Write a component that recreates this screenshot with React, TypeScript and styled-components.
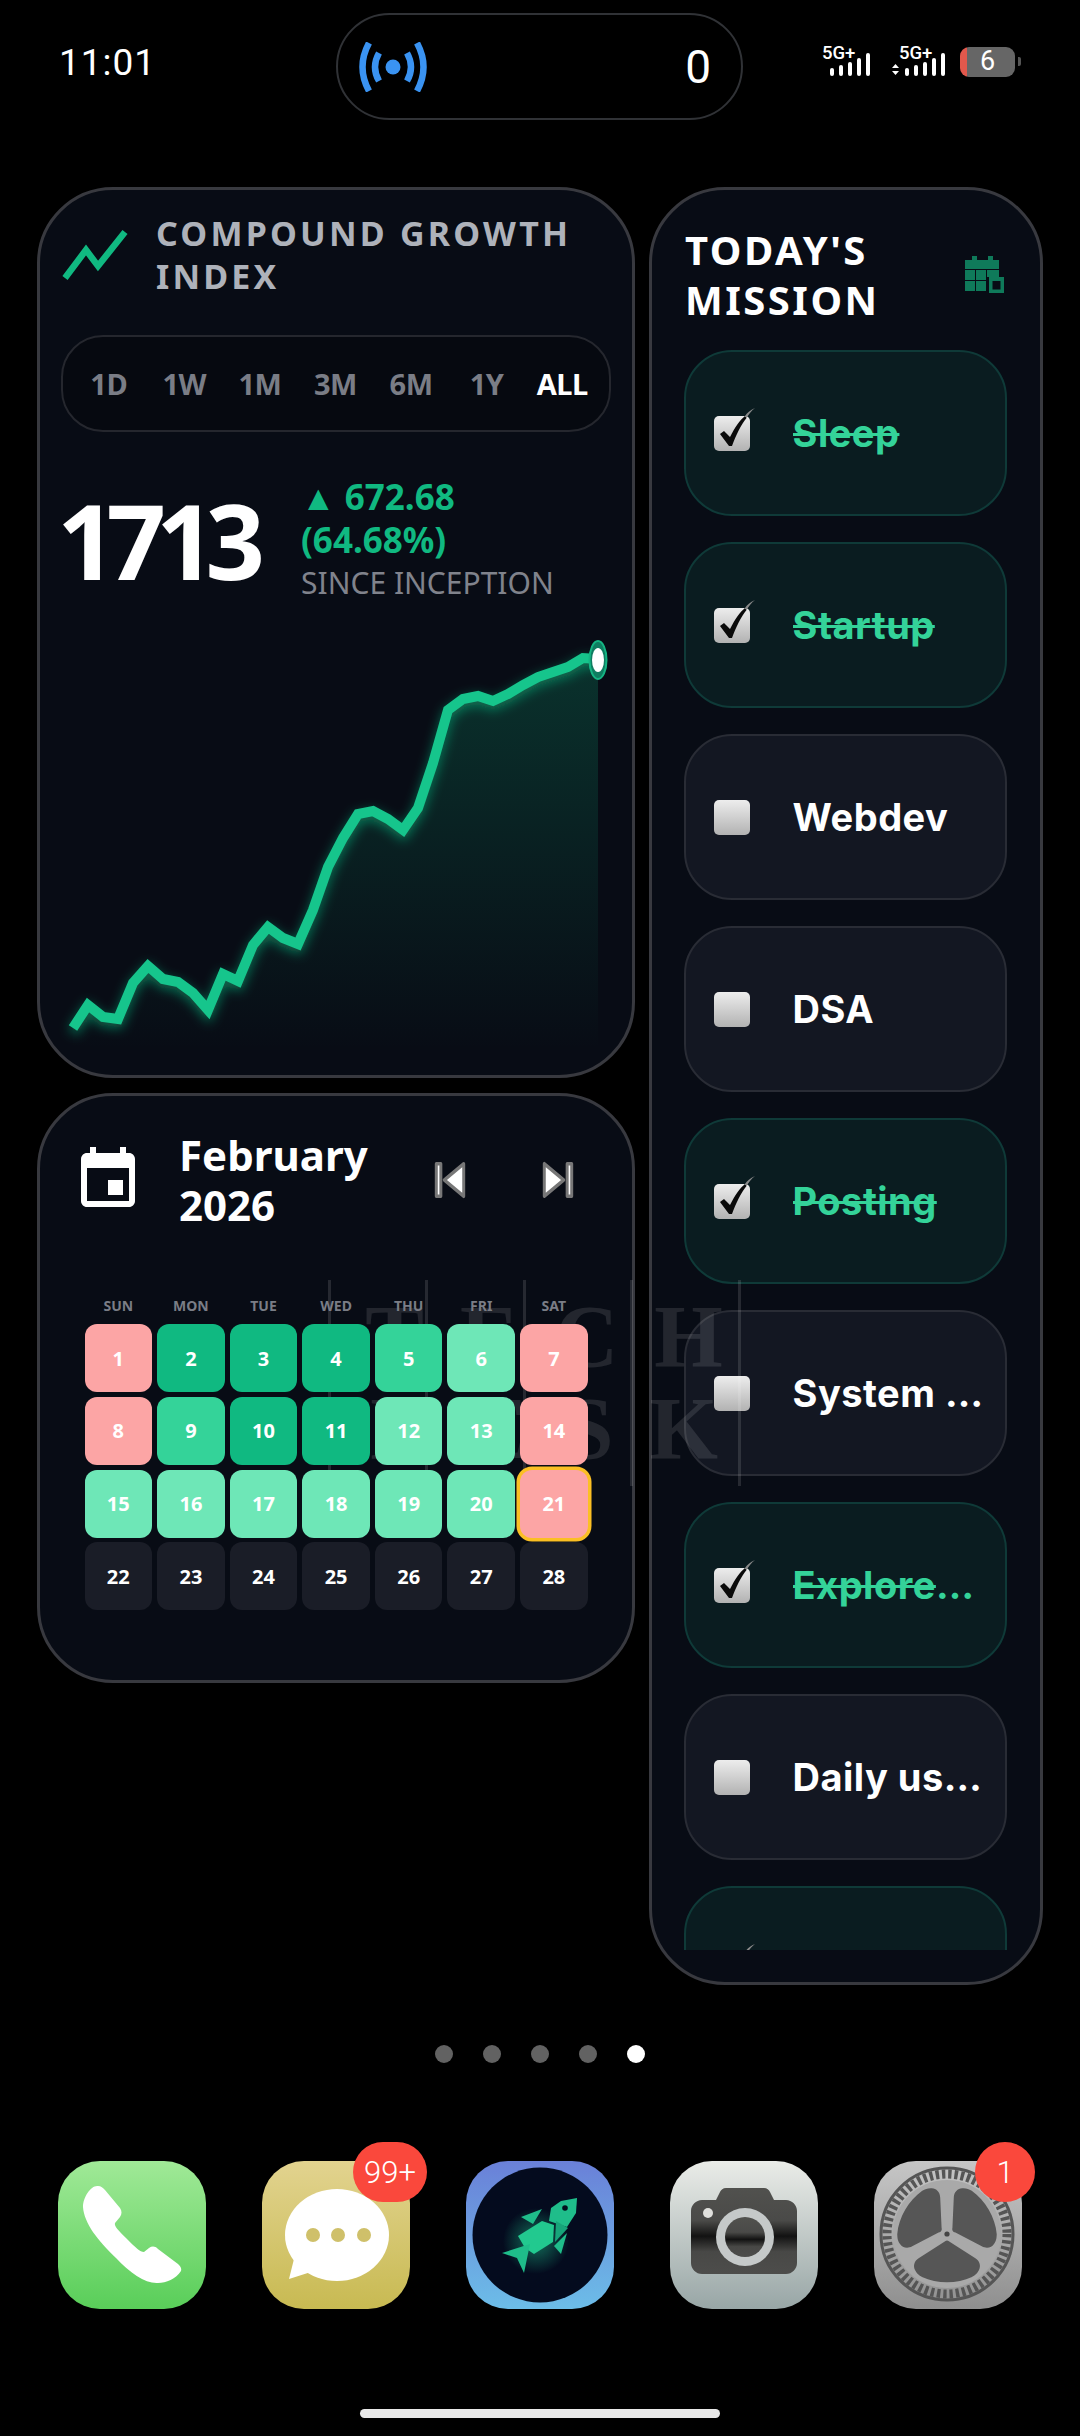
import React from "react";
import styled, { createGlobalStyle } from "styled-components";

const Global = createGlobalStyle`
  html, body { margin: 0; padding: 0; background: #000; }
  * { box-sizing: border-box; }
`;

const SANS = `"Noto Sans", "Open Sans", sans-serif`;

const Screen = styled.div`
  position: relative;
  width: 1080px;
  height: 2436px;
  background: #000;
  overflow: hidden;
  display: flex;
  flex-direction: column;
  font-family: ${SANS};
  color: #fff;
`;

/* ---------- status bar ---------- */
const StatusBar = styled.header`
  display: grid;
  grid-template-columns: 277px 407px 1fr;
  align-items: center;
  height: 107px;
  margin-top: 13px;
  padding-left: 59px;
`;
const Clock = styled.div`
  font-family: Roboto, sans-serif;
  font-size: 37px;
  letter-spacing: 1px;
  line-height: 1;
  margin-top: -8px;
`;
const Island = styled.div`
  height: 107px;
  border: 2px solid #303236;
  border-radius: 54px;
  display: flex;
  align-items: center;
  justify-content: space-between;
  padding: 0 30px 0 20px;
`;
const IslandCount = styled.span`
  font-family: Roboto, sans-serif;
  font-size: 46px;
  font-weight: 400;
  line-height: 1;
`;
const StatusIcons = styled.div`
  display: flex;
  align-items: center;
  padding-left: 79px;
  gap: 20px;
  margin-top: -10px;
`;
const SignalSvg = styled.svg`
  display: block;
  height: 32px;
  overflow: visible;
`;
const Battery = styled.div`
  position: relative;
  width: 55px;
  height: 30px;
  margin-left: -6px;
  border-radius: 9px;
  background: linear-gradient(90deg, #e2584c 0 7px, #666 7px);
  display: flex;
  align-items: center;
  justify-content: center;
  font-family: Roboto, sans-serif;
  font-size: 27px;
  line-height: 1;
  &::after {
    content: "";
    position: absolute;
    right: -6px;
    top: 10px;
    width: 3px;
    height: 9px;
    border-radius: 0 2px 2px 0;
    background: #555;
  }
`;

/* ---------- widgets ---------- */
const Widgets = styled.main`
  display: grid;
  grid-template-columns: 598px 394px;
  column-gap: 14px;
  height: 1798px;
  margin-top: 67px;
  padding-left: 37px;
`;
const LeftColumn = styled.div`
  display: flex;
  flex-direction: column;
  gap: 15px;
`;
const Card = styled.section<{ $h?: number }>`
  background: #080c15;
  border: 3px solid #38393f;
  border-radius: 76px;
  height: ${(p) => (p.$h ? `${p.$h}px` : "100%")};
  overflow: hidden;
`;

const ChartHeader = styled.div`
  display: flex;
  align-items: center;
  gap: 26px;
  padding: 22px 20px 0 22px;
`;
const ChartTitle = styled.h2`
  margin: 0;
  font-size: 34px;
  line-height: 43px;
  font-weight: 700;
  letter-spacing: 3.2px;
  color: #aeb2ba;
`;
const Ranges = styled.div`
  display: grid;
  grid-template-columns: repeat(7, 1fr);
  align-items: center;
  width: 550px;
  height: 97px;
  margin: 37px 0 0 21px;
  padding: 0 9px 0 8px;
  background: #060910;
  border: 2.5px solid #25272e;
  border-radius: 42px;
`;
const RangeItem = styled.span<{ $active?: boolean }>`
  text-align: center;
  font-size: 29px;
  font-weight: 700;
  letter-spacing: -0.5px;
  color: ${(p) => (p.$active ? "#fff" : "#7a7d86")};
`;
const Stats = styled.div`
  display: flex;
  align-items: flex-start;
  margin: 43px 0 0 17px;
`;
const IndexValue = styled.div`
  font-size: 104px;
  font-weight: 700;
  line-height: 129px;
  letter-spacing: -10px;
  width: 244px;
`;
const Delta = styled.div`
  color: #10b981;
  font-size: 35px;
  font-weight: 700;
  line-height: 43px;
  white-space: nowrap;
`;
const Since = styled.div`
  color: #80838c;
  font-size: 30px;
  line-height: 43px;
  white-space: nowrap;
`;
const ChartSvg = styled.svg`
  display: block;
  width: 550px;
  height: 420px;
  margin: 36px 0 0 20px;
  overflow: visible;
`;

const CalendarHeader = styled.div`
  display: flex;
  align-items: center;
  padding: 34px 0 0 32px;
`;
const MonthTitle = styled.h2`
  flex: 0 0 255px;
  margin: 0 0 0 35px;
  font-size: 42px;
  font-weight: 700;
  line-height: 50px;
`;
const SkipButton = styled.svg`
  display: block;
  flex: 0 0 32px;
  height: 38px;
  margin-right: 76px;
  &:last-child {
    margin-right: 0;
  }
`;
const Weekdays = styled.div`
  display: grid;
  grid-template-columns: repeat(7, 67.6px);
  column-gap: 5px;
  margin: 66px 0 8px 44.5px;
  position: relative;
  z-index: 2;
`;
const Weekday = styled.span`
  text-align: center;
  font-size: 14px;
  font-weight: 700;
  line-height: 20px;
  color: #7a7d86;
`;
const Days = styled.div`
  display: grid;
  grid-template-columns: repeat(7, 67.6px);
  grid-auto-rows: 68px;
  gap: 4.8px 5px;
  margin-left: 44.5px;
`;
const DAY_COLORS = {
  pink: "#fca5a5",
  dark: "#10b981",
  mid: "#34d399",
  light: "#6ee7b7",
  none: "#1a1d27",
} as const;
const Day = styled.div<{ $tone: keyof typeof DAY_COLORS; $today?: boolean }>`
  position: relative;
  z-index: 2;
  display: flex;
  align-items: center;
  justify-content: center;
  border-radius: 12px;
  background: ${(p) => DAY_COLORS[p.$tone]};
  font-size: 20px;
  font-weight: 700;
  color: #fff;
  box-shadow: ${(p) => (p.$today ? "0 0 0 3.5px #fbbf24" : "none")};
`;

/* ---------- missions ---------- */
const MissionHeader = styled.div`
  display: flex;
  align-items: center;
  justify-content: space-between;
  padding: 35px 35px 0 33px;
`;
const MissionTitle = styled.h2`
  margin: 0;
  font-size: 40px;
  font-weight: 700;
  line-height: 50px;
  letter-spacing: 2.5px;
`;
const MissionList = styled.div`
  display: flex;
  flex-direction: column;
  gap: 26px;
  height: 1600px;
  margin: 25px 33px 0 32px;
  overflow: hidden;
`;
const Task = styled.div<{ $done?: boolean }>`
  flex: 0 0 166px;
  display: flex;
  align-items: center;
  gap: 39px;
  padding: 0 22px 0 27.5px;
  border: 2.5px solid ${(p) => (p.$done ? "#0f3a38" : "#292c35")};
  border-radius: 48px;
  background: ${(p) => (p.$done ? "#0a1c20" : "#131722")};
`;
const TaskName = styled.span<{ $done?: boolean }>`
  flex: 1;
  min-width: 0;
  white-space: nowrap;
  overflow: hidden;
  text-overflow: ellipsis;
  font-family: Inter, sans-serif;
  font-size: 38px;
  letter-spacing: 0.5px;
  font-weight: 700;
  color: ${(p) => (p.$done ? "#34d399" : "#fff")};
  text-decoration: ${(p) => (p.$done ? "line-through" : "none")};
  text-decoration-thickness: 3px;
`;
const CheckSvg = styled.svg`
  flex: 0 0 40px;
  width: 40px;
  height: 46px;
  margin-top: -4px;
  overflow: visible;
`;

/* ---------- pager + dock ---------- */
const Pager = styled.div`
  display: flex;
  justify-content: center;
  gap: 30px;
  margin-top: 60px;
`;
const PagerDot = styled.span<{ $on?: boolean }>`
  width: 18px;
  height: 18px;
  border-radius: 50%;
  background: ${(p) => (p.$on ? "#fff" : "#626262")};
`;
const Dock = styled.nav`
  display: flex;
  gap: 56px;
  margin-top: 98px;
  padding-left: 58px;
`;
const AppIcon = styled.div`
  position: relative;
  width: 148px;
  height: 148px;
`;
const AppArt = styled.svg`
  display: block;
  width: 148px;
  height: 148px;
`;
const Badge = styled.span<{ $left: number; $w: number }>`
  position: absolute;
  top: -19px;
  left: ${(p) => p.$left}px;
  width: ${(p) => p.$w}px;
  height: 60px;
  border-radius: 30px;
  background: #fa483c;
  display: flex;
  align-items: center;
  justify-content: center;
  font-family: Roboto, sans-serif;
  font-size: 31px;
  font-weight: 300;
  line-height: 1;
`;
const HomeBar = styled.div`
  align-self: center;
  width: 360px;
  height: 9px;
  border-radius: 5px;
  background: #e8e8e8;
  margin-top: 100px;
`;

/* ---------- watermark over the widgets ---------- */
const Watermark = styled.div`
  position: absolute;
  left: 328px;
  top: 1280px;
  width: 412px;
  height: 206px;
  padding-left: 56px;
  z-index: 1;
  pointer-events: none;
  display: flex;
  flex-direction: column;
  align-items: center;
  justify-content: center;
  font-family: "Liberation Serif", serif;
  font-size: 88px;
  font-weight: 700;
  line-height: 92px;
  letter-spacing: 36px;
  white-space: nowrap;
  color: rgba(255, 255, 255, 0.11);
`;
const WatermarkRule = styled.i<{ $x: number }>`
  position: absolute;
  top: 0;
  bottom: 0;
  left: ${(p) => p.$x}px;
  width: 3px;
  background: rgba(255, 255, 255, 0.12);
`;

/* ---------- drawings ---------- */
const Tether = () => (
  <svg width="70" height="50" viewBox="0 0 70 50" style={{ display: "block", height: 50 }}>
    <g fill="none" stroke="#3a93f2" strokeWidth="6.5" strokeLinecap="butt">
      <path d="M11 1 Q-2 25 11 49" />
      <path d="M59 1 Q72 25 59 49" />
      <path d="M21 11 Q13 25 21 39" />
      <path d="M49 11 Q57 25 49 39" />
    </g>
    <circle cx="35" cy="25" r="7.5" fill="#3a93f2" />
  </svg>
);

const Signal = ({ arrows }: { arrows?: boolean }) => (
  <SignalSvg width={arrows ? 54 : 50} viewBox={arrows ? "0 0 54 32" : "0 0 50 32"}>
    <text x={arrows ? 7 : 0} y="13" fontFamily="Roboto, sans-serif" fontSize="18.500" fontWeight="500" fill="#fff">5G+</text>
    {arrows && <path d="M0 22l3.5-4 3.500 4zM0 25l3.500 4 3.500-4z" fill="#fff" />}
    {[8, 11, 14, 18, 23].map((h, i) => (
      <rect
        key={h}
        x={(arrows ? 13 : 8) + i * 9}
        y={30 - h}
        width="4"
        height={h}
        rx="2"
        fill="#fff"
      />
    ))}
  </SignalSvg>
);

const CHART_Y = [
  1028, 1005, 1017, 1019, 983, 966, 979, 982, 993, 1010, 974, 981, 945, 927, 938, 944, 910, 867,
  838, 814, 811, 819, 830, 808, 763, 710, 699, 696, 701, 694, 685, 677, 672, 667, 658, 659,
];
const CHART_LINE = CHART_Y.map((y, i) => `${73 + i * 15},${y}`).join(" L");

const Chart = () => (
  <ChartSvg viewBox="60 640 550 420">
    <defs>
      <linearGradient id="area" x1="0" y1="0" x2="0" y2="1">
        <stop offset="0" stopColor="#10b981" stopOpacity="0.22" />
        <stop offset="1" stopColor="#10b981" stopOpacity="0" />
      </linearGradient>
      <filter id="glow" x="-10%" y="-10%" width="120%" height="120%">
        <feGaussianBlur stdDeviation="6" />
      </filter>
    </defs>
    <path d={`M${CHART_LINE} L598,1050 L73,1050 Z`} fill="url(#area)" />
    <path d={`M${CHART_LINE}`} fill="none" stroke="#10b981" strokeOpacity="0.6" strokeWidth="10" filter="url(#glow)" transform="translate(0 4)" />
    <path d={`M${CHART_LINE}`} fill="none" stroke="#16c58c" strokeWidth="10" strokeLinejoin="miter" />
    <ellipse cx="598" cy="660" rx="8.5" ry="19" fill="#0f7d60" stroke="#15b583" strokeWidth="2" />
    <ellipse cx="598" cy="660" rx="6" ry="12" fill="#fff" />
  </ChartSvg>
);

const Check = ({ done }: { done?: boolean }) => (
  <CheckSvg viewBox="0 0 40 46">
    <defs>
      <linearGradient id="box" x1="0" y1="0" x2="0" y2="1">
        <stop offset="0" stopColor="#ededed" />
        <stop offset="1" stopColor="#b2b2b2" />
      </linearGradient>
    </defs>
    <rect x="0" y="8" width="36" height="35" rx="5" fill="url(#box)" />
    {done && (
      <>
        <path d="M6 26l4-3 6 6C21 19 26 12 31 8l1.500 2C27 17 22 27 18 38h-3z" fill="#0a0a0a" />
        <path d="M31 8C33 5 36 2 41 0C37 3 35 6 32.500 10z" fill="#8a8a8a" />
      </>
    )}
  </CheckSvg>
);

const PhoneArt = () => (
  <AppArt viewBox="0 0 148 148">
    <defs>
      <linearGradient id="ph" x1="0" y1="0" x2="0" y2="1">
        <stop offset="0" stopColor="#a0e997" />
        <stop offset="1" stopColor="#59ce59" />
      </linearGradient>
    </defs>
    <rect width="148" height="148" rx="42" fill="url(#ph)" />
    <path
      d="M40 25C33 24 25 36 25 46C26 62 40 80 58 97C72 112 88 123 100 122C108 122 118 118 123 110C124 107 122 105 120 103L100 88C97 85 94 85 91 87L86 91C82 91 78 87 68 77C60 69 56 65 57 62L62 56C64 53 64 50 62 47L47 29C45 27 43 25 40 25Z"
      fill="#fff"
    />
  </AppArt>
);

const MessageArt = () => (
  <AppArt viewBox="0 0 148 148">
    <defs>
      <linearGradient id="ms" x1="0" y1="0" x2="0" y2="1">
        <stop offset="0" stopColor="#e2d38f" />
        <stop offset="1" stopColor="#c8ba52" />
      </linearGradient>
    </defs>
    <rect width="148" height="148" rx="42" fill="url(#ms)" />
    <ellipse cx="75" cy="74" rx="52" ry="46" fill="#fff" />
    <path d="M32 98L27 118L52 110Z" fill="#fff" />
    {[51, 76, 102].map((x) => (
      <circle key={x} cx={x} cy="74" r="7" fill="#cfc06a" />
    ))}
  </AppArt>
);

const FishArt = () => (
  <AppArt viewBox="0 0 148 148">
    <defs>
      <linearGradient id="fb" x1="0" y1="0" x2="0" y2="1">
        <stop offset="0" stopColor="#6a80d8" />
        <stop offset="1" stopColor="#6cbde8" />
      </linearGradient>
      <radialGradient id="fg">
        <stop offset="0" stopColor="#1db584" stopOpacity="0.6" />
        <stop offset="1" stopColor="#1db584" stopOpacity="0" />
      </radialGradient>
    </defs>
    <rect width="148" height="148" rx="42" fill="url(#fb)" />
    <circle cx="74" cy="74" r="67.5" fill="#040b1e" />
    <circle cx="70" cy="80" r="33" fill="url(#fg)" />
    <g fill="#1fbd8a">
      <path d="M111 37L110 52L101 66L83 60L85 47L95 40Z" />
      <path d="M52 75L76 60L88 64L87 81L68 93L59 87Z" fill="#22c98f" />
      <path d="M90 60L102 67L89 81Z" fill="#17a57a" />
      <path d="M55 56L76 48L67 63Z" />
      <path d="M101 72L88 85L95 93Z" />
      <path d="M36 92L64 83L58 112L51 97Z" />
    </g>
    <circle cx="99" cy="47" r="2.8" fill="#04101c" />
  </AppArt>
);

const CameraArt = () => (
  <AppArt viewBox="0 0 148 148">
    <defs>
      <linearGradient id="cb" x1="0" y1="0" x2="0" y2="1">
        <stop offset="0" stopColor="#eaece8" />
        <stop offset="1" stopColor="#98a6a6" />
      </linearGradient>
      <linearGradient id="cm" x1="0" y1="0" x2="0" y2="1">
        <stop offset="0" stopColor="#51514e" />
        <stop offset="0.38" stopColor="#4a4a48" />
        <stop offset="0.56" stopColor="#121212" />
        <stop offset="0.74" stopColor="#484846" />
        <stop offset="1" stopColor="#4d4d4b" />
      </linearGradient>
    </defs>
    <rect width="148" height="148" rx="42" fill="url(#cb)" />
    <path
      d="M56 27H94C97 27 99 29 100 31L104 39H116C122 39 127 44 127 50V102C127 108 122 113 116 113H32C26 113 21 108 21 102V50C21 44 26 39 32 39H46L50 31C51 29 53 27 56 27Z"
      fill="url(#cm)"
    />
    <circle cx="75" cy="76" r="29" fill="#c5c9c9" />
    <circle cx="75" cy="76" r="20" fill="url(#cm)" />
    <circle cx="38" cy="52" r="5" fill="#dfdfdc" />
  </AppArt>
);

const SettingsArt = () => (
  <AppArt viewBox="0 0 148 148">
    <defs>
      <linearGradient id="sb" x1="0" y1="0" x2="0" y2="1">
        <stop offset="0" stopColor="#c6c6c6" />
        <stop offset="1" stopColor="#8f8f8f" />
      </linearGradient>
    </defs>
    <rect width="148" height="148" rx="42" fill="url(#sb)" />
    <circle cx="73" cy="73" r="66" fill="none" stroke="#555" strokeWidth="3" />
    <circle cx="73" cy="73" r="60" fill="none" stroke="#555" strokeWidth="9" strokeDasharray="3.4 2.9" />
    <circle cx="73" cy="73" r="54" fill="#a9a9a9" />
    {[0, 120, 240].map((r) => (
      <path
        key={r}
        transform={`rotate(${r} 73 73)`}
        d="M70 81C72 79 74 79 76 81L101 97C106 100 107 105 105 109C103 113 101 114 98 116C83 123 63 123 48 116C45 114 43 113 41 109C39 105 40 100 45 97Z"
        fill="#565656"
      />
    ))}
    <circle cx="73" cy="73" r="2.6" fill="#444" />
  </AppArt>
);

/* ---------- data ---------- */
const RANGES = ["1D", "1W", "1M", "3M", "6M", "1Y", "ALL"];
const WEEK = ["SUN", "MON", "TUE", "WED", "THU", "FRI", "SAT"];
const TONES: (keyof typeof DAY_COLORS)[] = [
  "pink", "dark", "dark", "dark", "mid", "light", "pink",
  "pink", "mid", "dark", "dark", "light", "light", "pink",
  "light", "light", "light", "light", "light", "light", "pink",
  "none", "none", "none", "none", "none", "none", "none",
];
const TASKS = [
  { name: "Sleep", done: true },
  { name: "Startup", done: true },
  { name: "Webdev" },
  { name: "DSA" },
  { name: "Posting", done: true },
  { name: "System Design" },
  { name: "Explorers club", done: true },
  { name: "Daily usage" },
  { name: "Reading", done: true },
];

export default function App() {
  return (
    <Screen>
      <Global />
      <StatusBar>
        <Clock>11:01</Clock>
        <Island>
          <Tether />
          <IslandCount>0</IslandCount>
        </Island>
        <StatusIcons>
          <Signal />
          <Signal arrows />
          <Battery>6</Battery>
        </StatusIcons>
      </StatusBar>

      <Widgets>
        <LeftColumn>
          <Card $h={891}>
            <ChartHeader>
              <svg width="68" height="52" viewBox="0 0 68 52" style={{ flex: "0 0 68px" }}>
                <path d="M3 49L24 21L36 37L63 3" fill="none" stroke="#10b981" strokeWidth="6.5" />
              </svg>
              <ChartTitle>COMPOUND GROWTH INDEX</ChartTitle>
            </ChartHeader>
            <Ranges>
              {RANGES.map((r) => (
                <RangeItem key={r} $active={r === "ALL"}>{r}</RangeItem>
              ))}
            </Ranges>
            <Stats>
              <IndexValue>1713</IndexValue>
              <div>
                <Delta>▲ 672.68<br />(64.68%)</Delta>
                <Since>SINCE INCEPTION</Since>
              </div>
            </Stats>
            <Chart />
          </Card>

          <Card $h={590}>
            <CalendarHeader>
              <svg width="72" height="72" viewBox="0 0 24 24" fill="#fff" style={{ flex: "0 0 72px" }}>
                <path d="M17 12h-5v5h5v-5zM16 1v2H8V1H6v2H5c-1.11 0-1.99.9-1.99 2L3 19c0 1.1.89 2 2 2h14c1.1 0 2-.9 2-2V5c0-1.1-.9-2-2-2h-1V1h-2zm3 18H5V8h14v11z" />
              </svg>
              <MonthTitle>February 2026</MonthTitle>
              <SkipButton viewBox="5 5 14 14" preserveAspectRatio="none">
                <path d="M6 6h2v12H6zm3.500 6l8.500 6V6z" fill="#fff" stroke="#777" strokeWidth="1.300" strokeLinejoin="round" />
              </SkipButton>
              <SkipButton viewBox="5 5 14 14" preserveAspectRatio="none">
                <path d="M6 18l8.500-6L6 6v12zM16 6v12h2V6h-2z" fill="#fff" stroke="#777" strokeWidth="1.300" strokeLinejoin="round" />
              </SkipButton>
            </CalendarHeader>
            <Weekdays>
              {WEEK.map((d) => (
                <Weekday key={d}>{d}</Weekday>
              ))}
            </Weekdays>
            <Days>
              {TONES.map((tone, i) => (
                <Day key={i} $tone={tone} $today={i === 20}>{i + 1}</Day>
              ))}
            </Days>
          </Card>
        </LeftColumn>

        <Card>
          <MissionHeader>
            <MissionTitle>TODAY'S<br />MISSION</MissionTitle>
            <svg width="40" height="38" viewBox="0 0 40 38" fill="#0f7a5a">
              <path d="M7 0h5v4h11V0h5v4h6v9H0V4h7z" />
              <path d="M0 14h10v10H0zM11 14h10v10H11zM22 14h12v7H22zM0 25h10v10H0zM11 25h10v10H11z" />
              <path d="M24 21h15v16H24zM27.500 25v8.500h8V25z" fillRule="evenodd" />
            </svg>
          </MissionHeader>
          <MissionList>
            {TASKS.map((t) => (
              <Task key={t.name} $done={t.done}>
                <Check done={t.done} />
                <TaskName $done={t.done}>{t.name}</TaskName>
              </Task>
            ))}
          </MissionList>
        </Card>
      </Widgets>

      <Pager>
        {[0, 1, 2, 3, 4].map((i) => (
          <PagerDot key={i} $on={i === 4} />
        ))}
      </Pager>

      <Dock>
        <AppIcon><PhoneArt /></AppIcon>
        <AppIcon><MessageArt /><Badge $left={91} $w={74}>99+</Badge></AppIcon>
        <AppIcon><FishArt /></AppIcon>
        <AppIcon><CameraArt /></AppIcon>
        <AppIcon><SettingsArt /><Badge $left={101} $w={60}>1</Badge></AppIcon>
      </Dock>
      <HomeBar />

      <Watermark>
        <WatermarkRule $x={0} />
        <WatermarkRule $x={97} />
        <WatermarkRule $x={195} />
        <WatermarkRule $x={302} />
        <WatermarkRule $x={410} />
        <span>TECH</span>
        <span>DESK</span>
      </Watermark>
    </Screen>
  );
}
